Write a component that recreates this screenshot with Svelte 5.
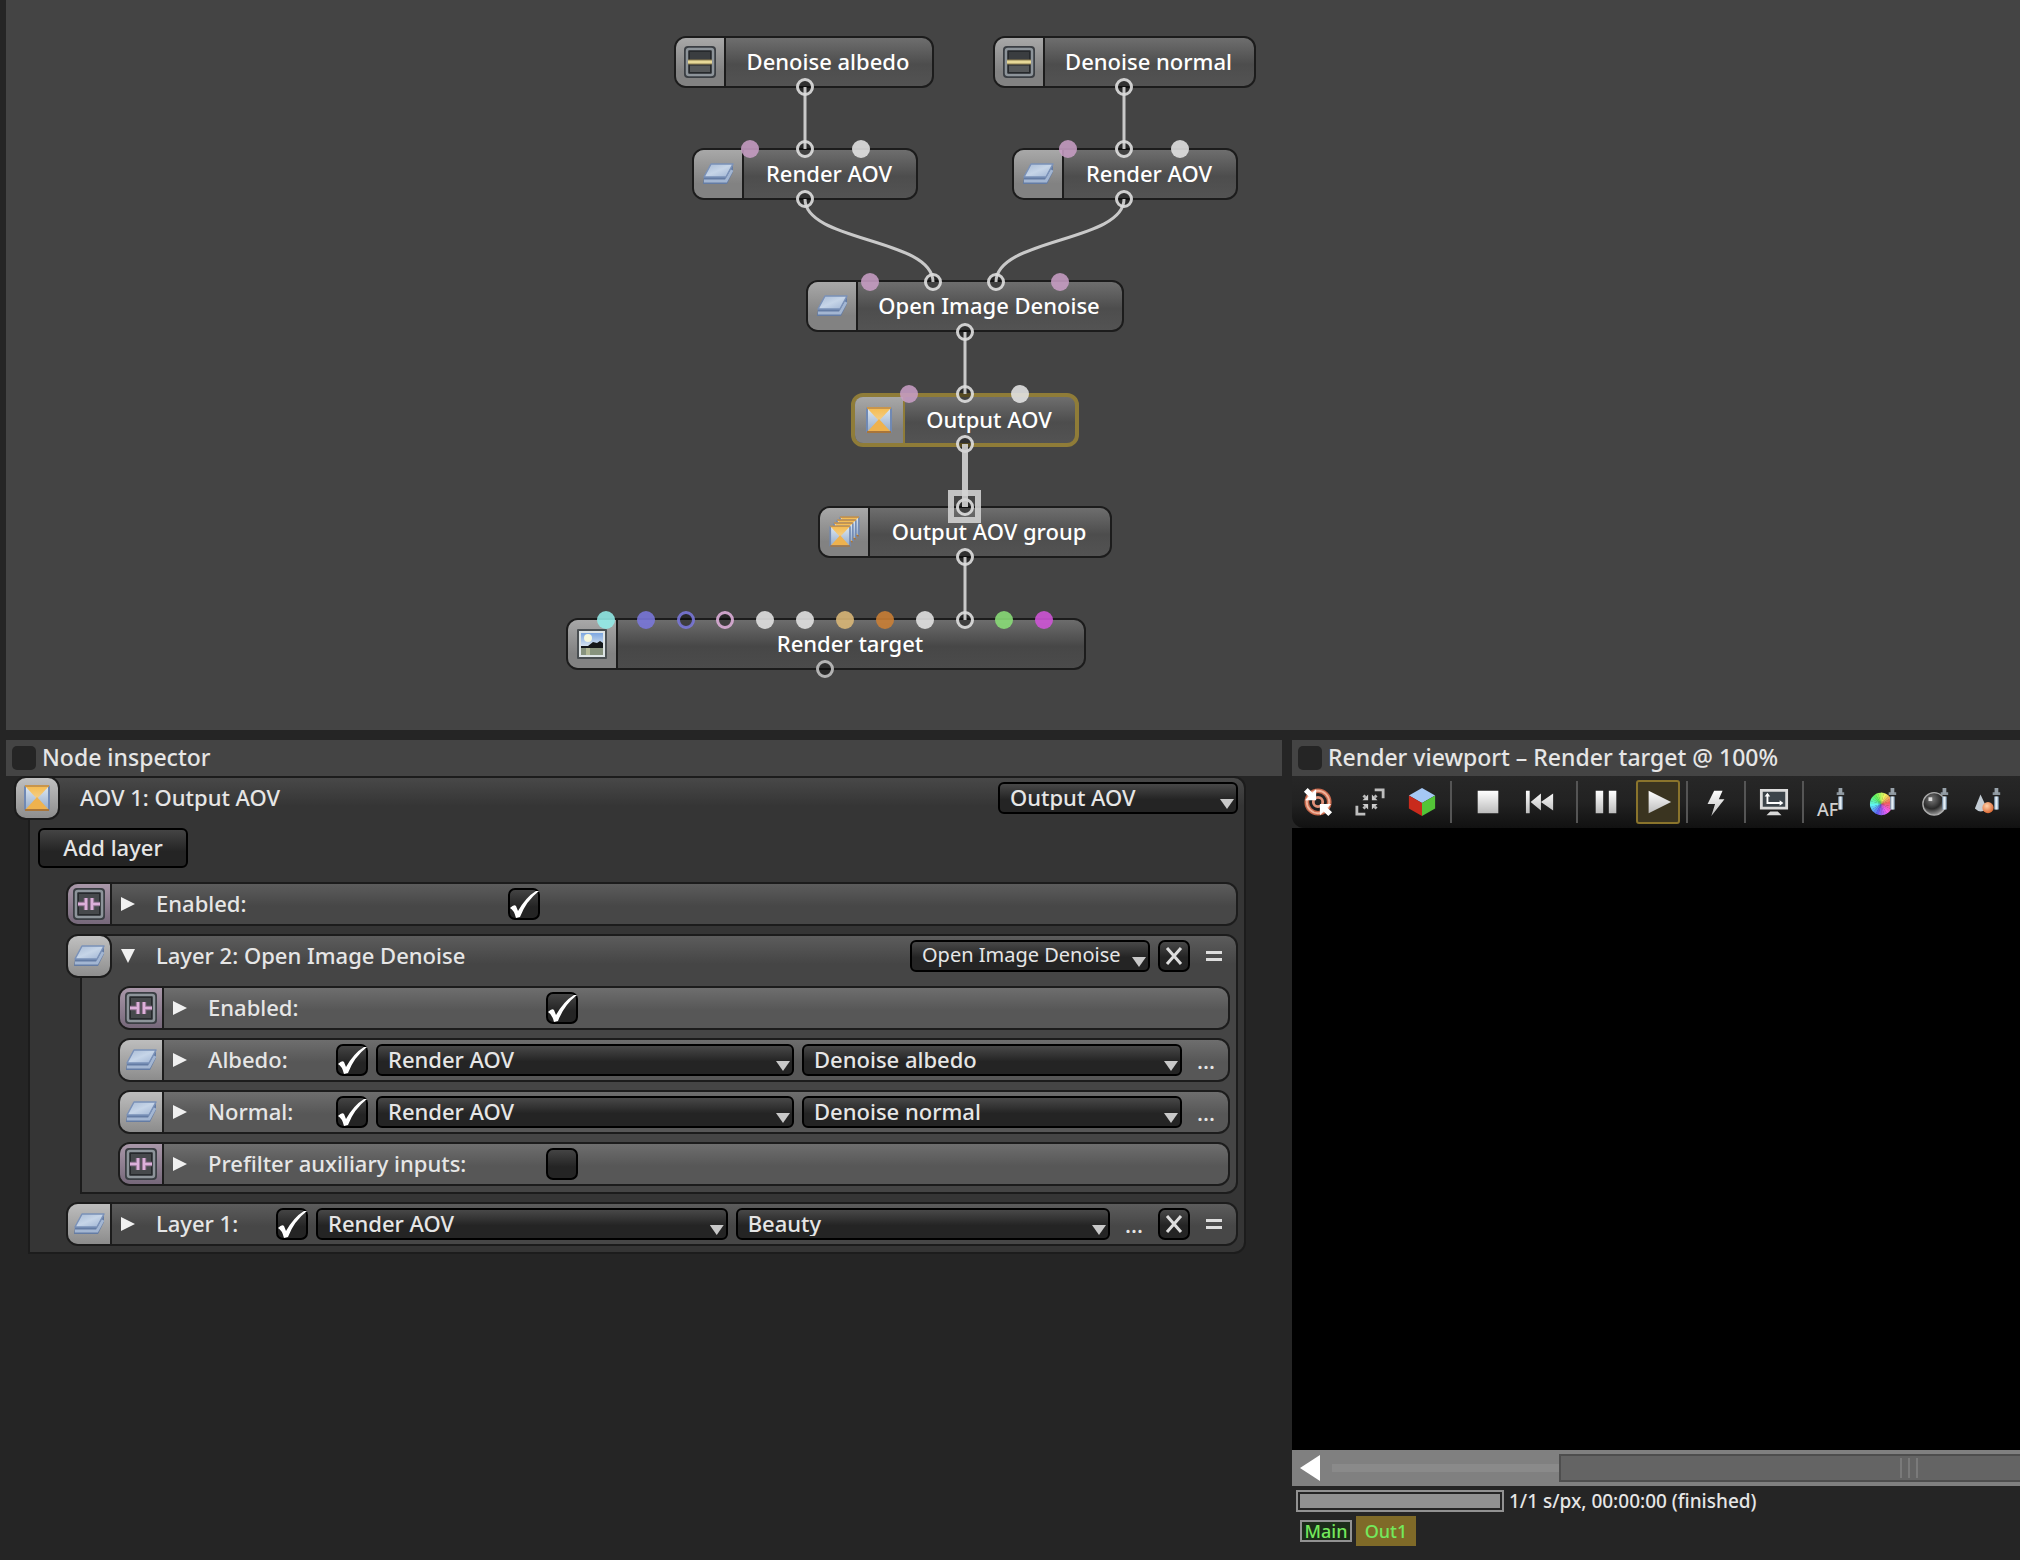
<script>
  const pink = "#c79dc4";
  const white = "#e4e4e4";

  const nodes = [
    { name: "Denoise albedo", icon: "strip", x: 674, y: 36, w: 260 },
    { name: "Denoise normal", icon: "strip", x: 993, y: 36, w: 263 },
    { name: "Render AOV", icon: "layer", x: 692, y: 148, w: 226 },
    { name: "Render AOV", icon: "layer", x: 1012, y: 148, w: 226 },
    { name: "Open Image Denoise", icon: "layer", x: 806, y: 280, w: 318 },
    { name: "Output AOV", icon: "output", x: 851, y: 393, w: 228, selected: true },
    { name: "Output AOV group", icon: "group", x: 818, y: 506, w: 294 },
    { name: "Render target", icon: "picture", x: 566, y: 618, w: 520, dark: true }
  ];

  // filled pins are unconnected inputs, open ones can take a wire
  const pins = [
    { x: 805, y: 87, open: true }, { x: 1124, y: 87, open: true },
    { x: 750, y: 149, color: pink }, { x: 805, y: 149, open: true }, { x: 861, y: 149, color: white },
    { x: 1068, y: 149, color: pink }, { x: 1124, y: 149, open: true }, { x: 1180, y: 149, color: white },
    { x: 805, y: 199, open: true }, { x: 1124, y: 199, open: true },
    { x: 870, y: 282, color: pink }, { x: 933, y: 282, open: true }, { x: 996, y: 282, open: true }, { x: 1060, y: 282, color: pink },
    { x: 965, y: 332, open: true },
    { x: 909, y: 394, color: pink }, { x: 965, y: 394, open: true }, { x: 1020, y: 394, color: white },
    { x: 965, y: 444, open: true }, { x: 965, y: 507, open: true }, { x: 965, y: 557, open: true },
    { x: 606, y: 620, color: "#92ece8" }, { x: 646, y: 620, color: "#7a78dc" },
    { x: 686, y: 620, open: true, color: "#7a78dc" }, { x: 725, y: 620, open: true, color: "#e0b0dc" },
    { x: 765, y: 620, color: white }, { x: 805, y: 620, color: white },
    { x: 845, y: 620, color: "#dcb878" }, { x: 885, y: 620, color: "#cc8034" },
    { x: 925, y: 620, color: white }, { x: 965, y: 620, open: true },
    { x: 1004, y: 620, color: "#8ade78" }, { x: 1044, y: 620, color: "#d054d8" },
    { x: 825, y: 669, open: true, color: "#c4c4c4" }
  ];

  const wires = [
    "M805 87V149",
    "M1124 87V149",
    "M805 199C805 242 933 238 933 282",
    "M1124 199C1124 242 996 238 996 282",
    "M965 332V394",
    "M965 557V620"
  ];

  const hues = Array.from({ length: 24 }, (_, i) => i * 15);
  const wedge = (deg) => {
    const a = (deg * Math.PI) / 180;
    const b = ((deg + 17) * Math.PI) / 180;
    return `M13 18L${13 + 12 * Math.cos(a)} ${18 - 12 * Math.sin(a)}A12 12 0 0 0 ${13 + 12 * Math.cos(b)} ${18 - 12 * Math.sin(b)}Z`;
  };

  let enabled = true;
  let denoiseEnabled = true;
  let prefilter = false;
  let layerOn = true;
  let inputs = [
    { id: "albedo", label: "Albedo:", on: true, pass: "Denoise albedo" },
    { id: "normal", label: "Normal:", on: true, pass: "Denoise normal" }
  ];
</script>

<svg class="defs" width="0" height="0" aria-hidden="true">
  <defs>
    <linearGradient id="metal" x1="0" y1="0" x2="0" y2="1"><stop offset="0" stop-color="#fff" /><stop offset="1" stop-color="#bcbcbc" /></linearGradient>
    <linearGradient id="sheet" x1="0" y1="0" x2="1" y2="1"><stop offset="0" stop-color="#a6b9d4" /><stop offset=".5" stop-color="#c6d5e8" /><stop offset="1" stop-color="#9db2d2" /></linearGradient>
    <linearGradient id="gold" x1="0" y1="0" x2="0" y2="1"><stop offset="0" stop-color="#f6bc50" /><stop offset="1" stop-color="#f2cf8c" /></linearGradient>
    <linearGradient id="side" x1="0" y1="0" x2="0" y2="1"><stop offset="0" stop-color="#dbe6f2" /><stop offset="1" stop-color="#98aecb" /></linearGradient>
    <linearGradient id="sky" x1="0" y1="0" x2="0" y2="1"><stop offset="0" stop-color="#7ca6e0" /><stop offset="1" stop-color="#e3ecf2" /></linearGradient>
    <radialGradient id="ball" cx=".4" cy=".3" r=".7"><stop offset="0" stop-color="#777" /><stop offset=".6" stop-color="#2a2a2a" /><stop offset="1" stop-color="#999" /></radialGradient>
    <radialGradient id="orange" cx=".4" cy=".35" r=".7"><stop offset="0" stop-color="#ffd0a8" /><stop offset="1" stop-color="#d9622c" /></radialGradient>
  </defs>
</svg>

{#snippet tile()}
  <rect x="3" y="3" width="26" height="26" rx="2" fill="#7089b4" />
  <rect x="5" y="5" width="22" height="22" fill="url(#side)" />
  <path d="M4 4H28L16 17Z" fill="url(#gold)" />
  <path d="M5 27H27L16 15Z" fill="#efb24e" />
  <path d="M4 28H28" stroke="#a8753a" stroke-width="2" />
  <path d="M4 4H28" stroke="#c8954c" stroke-width="2" />
{/snippet}

{#snippet icon(kind)}
  <svg class="icon" viewBox="0 0 32 32" width="32" height="32" aria-hidden="true">
    {#if kind === "strip" || kind === "switch"}
      <rect x="0" y="0" width="32" height="32" rx="4" fill="#3a3e43" />
      <rect x="3" y="3" width="26" height="26" rx="2" fill="#26292c" stroke="#8d949a" stroke-width="2.500" />
      <rect x="6" y="6" width="20" height="20" fill={kind === "strip" ? "#3a3d40" : "#46494c"} />
      {#if kind === "strip"}
        <path d="M6 20H26V26H6Z" fill="#55585a" />
        <path d="M4 16H28" stroke="#8d7f4e" stroke-width="5" />
        <path d="M4 16H28" stroke="#e6d898" stroke-width="3" />
      {:else}
        <path d="M5 16H13M19 16H27M13 10V22M19 10V22" stroke="#8d6f8c" stroke-width="4.500" />
        <path d="M5 16H13M19 16H27M13 10V22M19 10V22" stroke="#dcb0da" stroke-width="2.500" />
      {/if}
    {:else if kind === "layer"}
      <path d="M2 19L1 26H25L31 14V8Z" fill="#647ca4" />
      <path d="M2 23H24L30 12" fill="none" stroke="#a3b6d2" stroke-width="3" />
      <path d="M9 6H31L24 19H2Z" fill="url(#sheet)" stroke="#7a91b8" stroke-width="1.500" stroke-linejoin="round" />
    {:else if kind === "output"}
      {@render tile()}
    {:else if kind === "group"}
      <g transform="translate(9 -2) scale(.78)">{@render tile()}</g>
      <g transform="translate(6 1) scale(.78)">{@render tile()}</g>
      <g transform="translate(3 4) scale(.78)">{@render tile()}</g>
      <g transform="translate(-1 7) scale(.82)">{@render tile()}</g>
    {:else}
      <rect x="1" y="1" width="30" height="30" rx="1" fill="#4a4f52" />
      <rect x="3" y="3" width="26" height="26" fill="#dde4e6" />
      <rect x="5" y="5" width="22" height="15" fill="url(#sky)" />
      <circle cx="12" cy="10" r="4" fill="#f6f7dc" />
      <path d="M5 20V18L12 18L17 14L21 15L24 13L27 15V20Z" fill="#14181a" />
      <path d="M5 20H27V27H5Z" fill="#87937e" />
      <path d="M10 20H14V27H10Z" fill="#b4ba96" />
    {/if}
  </svg>
{/snippet}

{#snippet arrow(open)}
  <button class="toggle" aria-label="Toggle section" aria-expanded={open}>
    <svg viewBox="0 0 16 16" width="16" height="16" aria-hidden="true"><path d={open ? "M1 1H15L8 15Z" : "M1 1V15L15 8Z"} fill="#f0f0f0" /></svg>
  </button>
{/snippet}

{#snippet dropdown(label, options, small)}
  <span class="select">
    <select class:small aria-label={label}>
      {#each options as option}<option>{option}</option>{/each}
    </select>
  </span>
{/snippet}

{#snippet tick()}
  <svg class="tick" viewBox="0 0 32 32" width="32" height="32" aria-hidden="true"><path d="M2 20Q6 16 8 18L10 23Q18 9 28 3H31Q18 13 12 29L8 30Q6 22 2 20Z" fill="#fff" /></svg>
{/snippet}

{#snippet tail()}
  <button class="square" aria-label="Remove layer">
    <svg viewBox="0 0 20 20" width="20" height="20" aria-hidden="true"><path d="M3 2L17 18M17 2L3 18" stroke="#ddd" stroke-width="3" /></svg>
  </button>
  <button class="ghost" aria-label="Drag layer">
    <svg viewBox="0 0 18 12" width="18" height="12" aria-hidden="true"><path d="M1 2.500H17M1 9.500H17" stroke="#ddd" stroke-width="3" /></svg>
  </button>
{/snippet}

{#snippet dropper()}
  <path d="M25 10V24" stroke="#7f97ad" stroke-width="5" />
  <path d="M25 10V24" stroke="#e4eef6" stroke-width="2.500" />
  <path d="M21 7H29" stroke="#8a949c" stroke-width="3" />
  <path d="M25 1V7" stroke="#98a2aa" stroke-width="4" />
{/snippet}

<main>
  <section class="graph" aria-label="Node graph">
    {#each nodes as node}
      <div class="node" class:selected={node.selected} class:dark={node.dark} style="left: {node.x}px; top: {node.y}px; width: {node.w}px;">
        <span class="node-icon">{@render icon(node.icon)}</span>
        <span class="node-name">{node.name}</span>
      </div>
    {/each}
    <svg class="wires" aria-hidden="true">
      {#each pins as pin}
        {#if pin.open}
          <circle cx={pin.x} cy={pin.y} r="7.500" fill="#000" fill-opacity=".4" stroke={pin.color ?? "#e4e4e4"} stroke-opacity=".88" stroke-width="3" />
        {:else}
          <circle cx={pin.x} cy={pin.y} r="9" fill={pin.color} fill-opacity=".88" />
        {/if}
      {/each}
      {#each wires as d}
        <path {d} fill="none" stroke="#dcdcdc" stroke-opacity=".88" stroke-width="3" />
      {/each}
      <path d="M965 444V507" stroke="#d4d4d4" stroke-opacity=".9" stroke-width="6" />
      <path d="M951 496V520H978V496M948 493H981" fill="none" stroke="#d4d4d4" stroke-opacity=".88" stroke-width="6" />
    </svg>
  </section>

  <div class="panels">
    <section class="inspector">
      <header class="title"><input type="checkbox" class="pin-box" aria-label="Pin node inspector" /><h2>Node inspector</h2></header>

      <div class="block root">
        <div class="head">
          <span class="badge">{@render icon("output")}</span>
          <span class="name root-name">AOV 1: Output AOV</span>
          {@render dropdown("AOV type", ["Output AOV"], false)}
        </div>
        <button class="add">Add layer</button>

        <div class="row">
          <span class="cell pinkish">{@render icon("switch")}</span>
          {@render arrow(false)}
          <label class="wide" for="enabled">Enabled:</label>
          <span class="check"><input type="checkbox" id="enabled" bind:checked={enabled} />{@render tick()}</span>
        </div>

        <div class="block nested">
          <div class="head">
            <span class="badge">{@render icon("layer")}</span>
            {@render arrow(true)}
            <span class="name">Layer 2: Open Image Denoise</span>
            {@render dropdown("Layer type", ["Open Image Denoise"], true)}
            {@render tail()}
          </div>

          <div class="row">
            <span class="cell pinkish">{@render icon("switch")}</span>
            {@render arrow(false)}
            <label class="wide" for="denoise-enabled">Enabled:</label>
            <span class="check"><input type="checkbox" id="denoise-enabled" bind:checked={denoiseEnabled} />{@render tick()}</span>
          </div>
          {#each inputs as input}
            <div class="row">
              <span class="cell">{@render icon("layer")}</span>
              {@render arrow(false)}
              <label class="short" for={input.id}>{input.label}</label>
              <span class="check"><input type="checkbox" id={input.id} bind:checked={input.on} />{@render tick()}</span>
              {@render dropdown(input.label + " source", ["Render AOV"], false)}
              {@render dropdown(input.label + " pass", [input.pass], false)}
              <button class="ghost">...</button>
            </div>
          {/each}
          <div class="row">
            <span class="cell pinkish">{@render icon("switch")}</span>
            {@render arrow(false)}
            <label class="wide" for="prefilter">Prefilter auxiliary inputs:</label>
            <span class="check"><input type="checkbox" id="prefilter" bind:checked={prefilter} />{@render tick()}</span>
          </div>
        </div>

        <div class="row">
          <span class="cell">{@render icon("layer")}</span>
          {@render arrow(false)}
          <label class="short" for="layer1">Layer 1:</label>
          <span class="check"><input type="checkbox" id="layer1" bind:checked={layerOn} />{@render tick()}</span>
          {@render dropdown("Layer 1 source", ["Render AOV"], false)}
          {@render dropdown("Layer 1 pass", ["Beauty"], false)}
          <button class="ghost">...</button>
          {@render tail()}
        </div>
      </div>
    </section>

    <section class="viewport">
      <header class="title"><input type="checkbox" class="pin-box" aria-label="Pin render viewport" /><h2>Render viewport – Render target @ 100%</h2></header>

      <div class="toolbar">
        <button aria-label="Recenter view">
          <svg viewBox="0 0 32 32"><circle cx="16" cy="16" r="12" fill="none" stroke="#c7684c" stroke-width="5" /><circle cx="16" cy="16" r="12" fill="none" stroke="#f0b29a" stroke-width="2" /><circle cx="16" cy="16" r="5" fill="none" stroke="#e09078" stroke-width="3" /><path d="M1 5L5 1L10 6L14 2V14H2L6 10Z" fill="#fff" /><path d="M18 18H30L26 22L31 27L27 31L22 26L18 30Z" fill="#fff" /></svg>
        </button>
        <button aria-label="Fit to view">
          <svg viewBox="0 0 32 32"><path d="M21 3H30V12M2 20V29H11" fill="none" stroke="#bdbdbd" stroke-width="3" /><path d="M9 9L11 11M23 9L21 11M9 23L11 21M23 23L21 21" stroke="#bbb" stroke-width="3" /><path d="M14 8V14H8ZM18 8V14H24ZM14 24V18H8ZM18 24V18H24Z" fill="#ccc" /></svg>
        </button>
        <button aria-label="Gizmo">
          <svg viewBox="0 0 32 32"><path d="M16 1L30 9L16 17L2 9Z" fill="#a5c8f4" /><path d="M2 9L16 17V31L2 23Z" fill="#c92a1c" /><path d="M30 9L16 17V31L30 23Z" fill="#53c437" /></svg>
        </button>
        <i class="sep after"></i>
        <button aria-label="Stop"><svg viewBox="0 0 32 32"><path d="M5 4H27V28H5Z" fill="url(#metal)" /></svg></button>
        <button aria-label="Restart"><svg viewBox="0 0 32 32"><path d="M1 4H5V28H1ZM6 16L17 7V25ZM17 16L30 7V25Z" fill="url(#metal)" /></svg></button>
        <i class="sep before"></i>
        <button aria-label="Pause"><svg viewBox="0 0 32 32"><path d="M5 4H13V28H5ZM19 4H27V28H19Z" fill="url(#metal)" /></svg></button>
        <button class="active" aria-label="Play"><svg viewBox="0 0 32 32"><path d="M6 4L30 16L6 28Z" fill="url(#metal)" /></svg></button>
        <i class="sep"></i>
        <button aria-label="Real time"><svg viewBox="0 0 32 32"><path d="M14 4H23L19 13H25L11 31L15 18H7Z" fill="url(#metal)" /></svg></button>
        <i class="sep"></i>
        <button aria-label="Lock resolution">
          <svg viewBox="0 0 32 32"><path d="M1 2H31V24H1Z" fill="#dcdcdc" /><path d="M4 5H28V21H4Z" fill="#3c444a" /><path d="M9 8V17H24" fill="none" stroke="#fff" stroke-width="2" /><path d="M6 10L9 6L12 10ZM22 14L26 17L22 20Z" fill="#fff" /><path d="M12 26H20L24 30H8Z" fill="#d8d8d8" /></svg>
        </button>
        <i class="sep"></i>
        <button class="af" aria-label="Pick focus"><span>AF</span><svg viewBox="0 0 32 32">{@render dropper()}</svg></button>
        <button aria-label="Pick white balance">
          <svg viewBox="0 0 32 32">{#each hues as hue}<path d={wedge(hue)} fill="hsl({hue}, 85%, 66%)" />{/each}{@render dropper()}</svg>
        </button>
        <button aria-label="Pick material">
          <svg viewBox="0 0 32 32"><circle cx="14" cy="18" r="12" fill="url(#ball)" stroke="#aaa" stroke-width="1.500" /><rect x="8" y="11" width="4" height="4" fill="#ddd" />{@render dropper()}</svg>
        </button>
        <button aria-label="Pick object">
          <svg viewBox="0 0 32 32"><path d="M8 8L15 23Q8 29 2 23Z" fill="#c3ccd4" /><circle cx="16" cy="22" r="6" fill="url(#orange)" />{@render dropper()}</svg>
        </button>
      </div>

      <div class="canvas"></div>

      <div class="scroll">
        <button aria-label="Scroll left"><svg viewBox="0 0 20 26" width="20" height="26" aria-hidden="true"><path d="M0 13L20 0V26Z" fill="#fff" /></svg></button>
        <div class="track"></div>
        <div class="thumb"><div class="grip"><i></i><i></i><i></i></div></div>
      </div>

      <div class="status">
        <div class="progress" role="progressbar" aria-label="Render progress" aria-valuenow="100"></div>
        <span>1/1 s/px, 00:00:00 (finished)</span>
      </div>
      <div class="tabs">
        <button class="tab main-tab">Main</button>
        <button class="tab out-tab">Out1</button>
      </div>
    </section>
  </div>
</main>

<style>
  :global(body) { margin: 0; background: #252525; }
  * { box-sizing: border-box; }
  .defs { position: absolute; }
  main { min-height: 100vh; display: flex; flex-direction: column; gap: 10px; padding-left: 6px; background: #252525; color: #e6e6e6; font: 500 22px/28px "Noto Sans", sans-serif; overflow: hidden; }
  button, select, input { font: inherit; color: inherit; margin: 0; }
  button { border: 0; padding: 0; background: none; }

  .graph { position: relative; height: 730px; margin-left: -6px; border-left: 6px solid #252525; background: #444; }
  .wires { position: absolute; inset: 0 0 0 -6px; width: 100%; height: 100%; overflow: visible; pointer-events: none; }
  .node { position: absolute; display: flex; height: 52px; margin-left: -6px; border: 2px solid #1c1c1c; border-radius: 12px; overflow: hidden; color: #fff; background: linear-gradient(#6e6e6e, #4d4d4d 55%, #535353); }
  .node.dark { background: linear-gradient(#6c6c6c, #474747 55%, #4b4b4b); }
  .node.selected { height: 54px; border: 4px solid #8f7c38; }
  .node-icon { display: grid; place-items: center; width: 50px; flex: none; border-right: 2px solid #1c1c1c; background: linear-gradient(#a8a8a8, #828282 70%); }
  .selected .node-icon { border-color: #8f7c38; }
  .node-name { flex: 1; padding-right: 2px; text-align: center; line-height: 46px; white-space: nowrap; }
  .selected .node-name { line-height: 44px; }
  .icon { display: block; }

  .panels { flex: 1; display: grid; grid-template-columns: minmax(0, 1276fr) minmax(0, 728fr); column-gap: 10px; }
  .title { display: flex; align-items: center; gap: 6px; height: 36px; padding-left: 6px; background: #444; }
  .title h2 { margin: 0; font-size: 23px; font-weight: 500; line-height: 32px; padding-bottom: 2px; white-space: nowrap; }
  .pin-box { appearance: none; width: 24px; height: 24px; border-radius: 5px; background: #252525; }

  .block { display: flex; flex-direction: column; gap: 8px; padding: 0 6px 6px 36px; border: 2px solid #1c1c1c; border-radius: 0 12px 12px 0; }
  .root { margin: 0 36px 0 22px; background: linear-gradient(#484848, #353535 28px); }
  .nested { margin-left: 14px; background: linear-gradient(#5c5c5c, #454545 28px); }
  .head { display: flex; align-items: center; gap: 8px; height: 44px; margin: -2px 0 0 -52px; }
  .head .toggle { margin-left: -8px; }
  .head .name { flex: 1; margin-left: -8px; padding-bottom: 2px; white-space: nowrap; }
  .head .root-name { margin-left: 12px; }
  .head .select { flex: 0 0 240px; }
  .badge { display: grid; place-items: center; width: 46px; height: 44px; border: 2px solid #1c1c1c; border-radius: 12px; background: linear-gradient(#c0c0c0, #8e8e8e); }
  .add { align-self: flex-start; width: 150px; height: 40px; margin: 0 0 6px -28px; padding-bottom: 2px; border: 2px solid #000; border-radius: 6px; background: linear-gradient(#444, #242424 60%); }

  .row { display: flex; align-items: center; gap: 8px; height: 44px; padding-right: 6px; border: 2px solid #1c1c1c; border-radius: 12px; overflow: hidden; background: linear-gradient(#5c5c5c, #474747 55%); }
  .nested .row { background: linear-gradient(#6e6e6e, #575757 55%); }
  .cell { display: grid; place-items: center; align-self: stretch; width: 44px; flex: none; border-right: 2px solid #1c1c1c; background: linear-gradient(#bdbdbd, #8c8c8c); }
  .cell.pinkish { background: linear-gradient(#a997a9, #76687a); }
  .toggle { display: flex; align-items: center; width: 44px; padding-left: 8px; flex: none; }
  .row .toggle { margin-left: -8px; }
  .row label { margin-left: -8px; padding-bottom: 2px; flex: none; white-space: nowrap; }
  .wide { width: 344px; }
  .nested .wide { width: 330px; }
  .short { width: 112px; }
  .nested .short { width: 120px; }

  .check { position: relative; width: 32px; height: 32px; flex: none; }
  .check input { appearance: none; display: block; width: 32px; height: 32px; border: 2px solid #000; border-radius: 7px; background: linear-gradient(#444, #242424 60%); }
  .tick { position: absolute; inset: 0; display: none; pointer-events: none; }
  .check input:checked + .tick { display: block; }

  .select { position: relative; flex: 10 1 0; }
  .check + .select { flex-grow: 11; }
  .select::after { content: ""; position: absolute; right: 4px; bottom: 5px; width: 14px; height: 10px; background: #c8c8c8; clip-path: polygon(0 0, 100% 0, 50% 100%); pointer-events: none; }
  select { appearance: none; display: block; width: 100%; height: 32px; padding: 0 24px 2px 10px; border: 2px solid #000; border-radius: 6px; background: linear-gradient(#484848, #242424 55%); line-height: 26px; }
  select.small { font-size: 20px; font-weight: 400; }
  .square { display: grid; place-items: center; width: 32px; height: 32px; flex: none; border: 2px solid #000; border-radius: 7px; background: linear-gradient(#484848, #242424 55%); }
  .ghost { display: grid; place-items: center; width: 32px; height: 32px; flex: none; }

  .viewport { display: flex; flex-direction: column; min-width: 0; }
  .toolbar { display: flex; align-items: center; gap: 8px; height: 52px; padding-left: 4px; overflow: hidden; border-bottom-left-radius: 12px; background: linear-gradient(#272727, #222 50%, #111); }
  .toolbar button { display: grid; place-items: center; width: 44px; height: 44px; flex: none; }
  .toolbar svg { width: 30px; height: 30px; }
  .toolbar .active { border: 2px solid #8a742c; border-radius: 3px; background: #3a3420; }
  .toolbar .af { position: relative; }
  .af span { position: absolute; left: 7px; bottom: 4px; font-size: 18px; line-height: 22px; color: #d0d0d0; }
  .sep { width: 2px; height: 42px; margin: 0 -2px; flex: none; background: #555; }
  .sep.after { margin-right: 6px; }
  .sep.before { margin-left: 6px; }
  .canvas { flex: 1; background: #000; }
  .scroll { display: flex; align-items: center; height: 36px; background: #808080; }
  .scroll button { display: flex; width: 40px; padding-left: 8px; flex: none; }
  .track { flex: 228 1 0; height: 8px; background: #8a8a8a; }
  .thumb { flex: 460 1 0; height: 28px; border: 2px solid #4e4e4e; border-right: 0; background: #646464; }
  .grip { display: flex; align-items: center; justify-content: flex-end; gap: 6px; height: 24px; margin-right: 102px; }
  .grip i { width: 2px; height: 20px; background: #7a7a7a; }
  .status { display: flex; align-items: center; gap: 5px; margin: 4px 0 0 4px; height: 22px; font-size: 19px; white-space: nowrap; }
  .progress { width: 208px; height: 22px; border: 2px solid #929292; padding: 2px; background: #929292 content-box; }
  .tabs { display: flex; align-items: center; gap: 4px; margin: 4px 0 14px 8px; font-size: 18px; color: #74e85c; }
  .main-tab { width: 52px; height: 22px; border: 2px solid #929292; line-height: 18px; background: #1c2c1a; }
  .out-tab { width: 60px; height: 30px; background: #7f6a28; }
</style>
